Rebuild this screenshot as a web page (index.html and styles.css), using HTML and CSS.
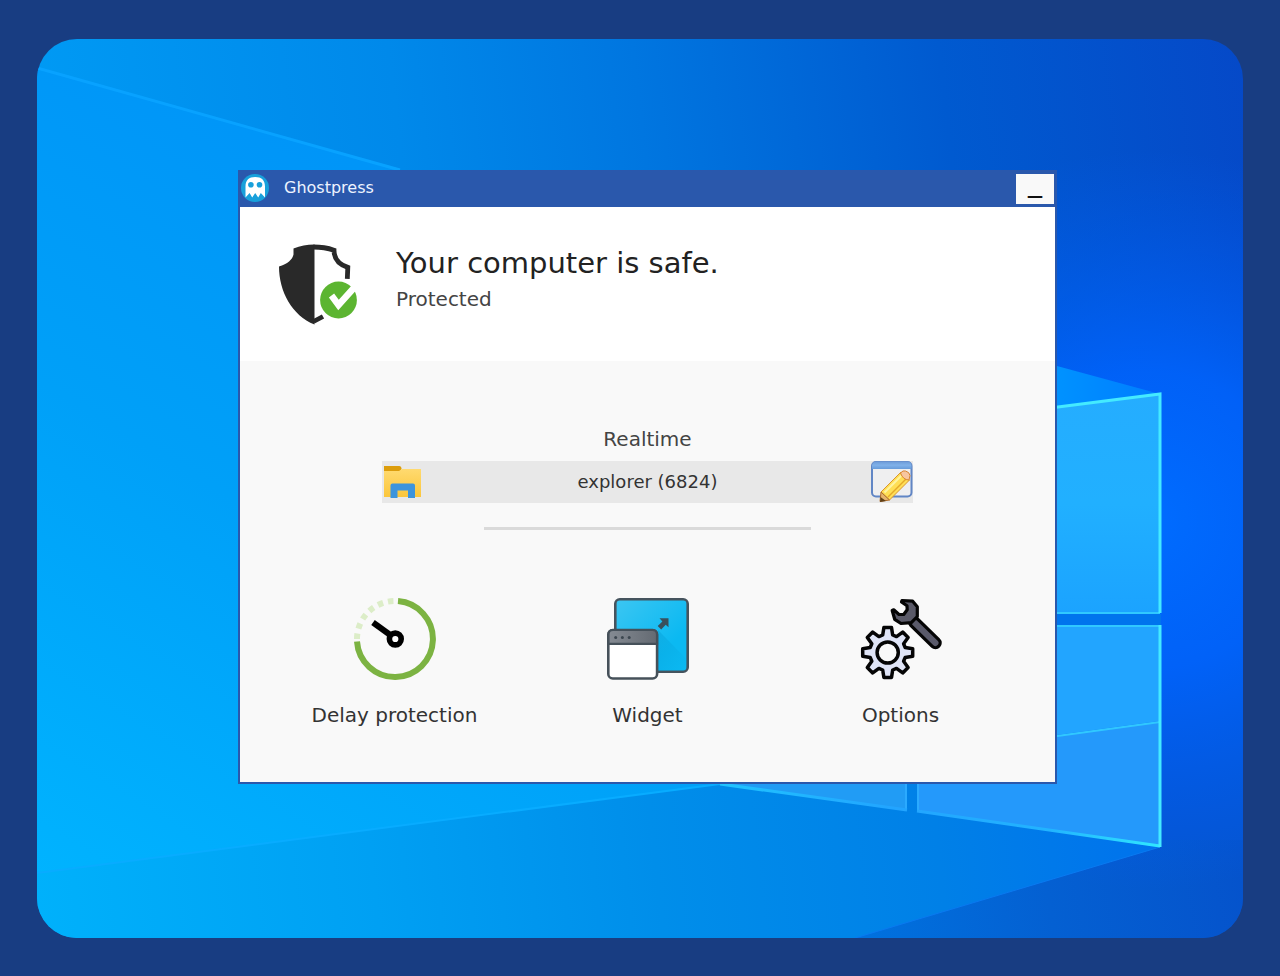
FILE: index.html
```html
<!DOCTYPE html>
<html lang="en">
<head>
<meta charset="utf-8">
<meta name="viewport" content="width=device-width, initial-scale=1">
<title>Ghostpress</title>
<link rel="stylesheet" href="styles.css">
</head>
<body>
<main class="desktop">
  <svg class="wallpaper" viewBox="37 39 1206 899" preserveAspectRatio="none" aria-hidden="true">
    <defs>
      <linearGradient id="sky" gradientUnits="userSpaceOnUse" x1="37" y1="180" x2="1243" y2="39">
        <stop offset="0" stop-color="#009af4"/><stop offset=".3" stop-color="#0089ea"/>
        <stop offset=".5" stop-color="#0076e0"/><stop offset=".75" stop-color="#005ad0"/><stop offset="1" stop-color="#0549c8"/>
      </linearGradient>
      <linearGradient id="beam" gradientUnits="userSpaceOnUse" x1="37" y1="900" x2="500" y2="140">
        <stop offset="0" stop-color="#00b4ff"/><stop offset=".5" stop-color="#00a0f8"/><stop offset="1" stop-color="#0092f8"/>
      </linearGradient>
      <linearGradient id="floor" gradientUnits="userSpaceOnUse" x1="37" y1="920" x2="1160" y2="800">
        <stop offset="0" stop-color="#00b1fb"/><stop offset=".3" stop-color="#00a0f3"/>
        <stop offset=".55" stop-color="#008eea"/><stop offset=".8" stop-color="#0080e7"/><stop offset="1" stop-color="#0072ed"/>
      </linearGradient>
      <linearGradient id="corner" gradientUnits="userSpaceOnUse" x1="855" y1="938" x2="1243" y2="870">
        <stop offset="0" stop-color="#0072df"/><stop offset=".5" stop-color="#0460d2"/><stop offset="1" stop-color="#0553cc"/>
      </linearGradient>
      <radialGradient id="glow" gradientUnits="userSpaceOnUse" cx="1150" cy="520" r="370">
        <stop offset="0" stop-color="#006cff"/><stop offset=".4" stop-color="#0064ff" stop-opacity=".85"/><stop offset="1" stop-color="#005cf0" stop-opacity="0"/>
      </radialGradient>
      <linearGradient id="ray" gradientUnits="userSpaceOnUse" x1="1057" y1="390" x2="1160" y2="394">
        <stop offset="0" stop-color="#0092ff"/><stop offset="1" stop-color="#007cff"/>
      </linearGradient>
      <linearGradient id="pane" x1="0" y1="0" x2="0" y2="1">
        <stop offset="0" stop-color="#25adff"/><stop offset=".5" stop-color="#21b0ff"/><stop offset="1" stop-color="#1ba3ff"/>
      </linearGradient>
      <linearGradient id="edge" gradientUnits="userSpaceOnUse" x1="720" y1="784" x2="1160" y2="847">
        <stop offset="0" stop-color="#20c4ff"/><stop offset=".4" stop-color="#22a4ff"/><stop offset=".75" stop-color="#22b4ff"/><stop offset="1" stop-color="#30e8ff"/>
      </linearGradient>
    </defs>
    <path fill="url(#sky)" d="M37 39h1206v899H37z"/>
    <path fill="url(#corner)" d="M855 938l305-91V740h83v198z"/>
    <path fill="#0555d2" d="M1160 640h83v200h-83z"/>
    <path fill="url(#glow)" d="M700 39h543v899H700z"/>
    <path fill="url(#beam)" d="M37 68l363 102 325 100v514L37 874z"/>
    <path fill="url(#ray)" d="M1057 366l103 28-103 14z"/>
    <path fill="url(#floor)" d="M37 873l683-89h440v63L855 938H37z"/>
    <path stroke="#08a2ff" stroke-width="3" fill="none" d="M37 68l363 102"/>
    <path stroke="#08acff" stroke-width="2" fill="none" d="M37 873l683-89"/>
    <path stroke="#0a7af0" stroke-width="1" fill="none" d="M855 938l305-91"/>
    <path fill="#0074ed" d="M1050 614h111v11h-111z"/>
    <path fill="url(#pane)" d="M1050 408l110-15v221h-110z"/>
    <path fill="#22a5ff" d="M1050 625h110v96l-110 15z"/>
    <path fill="#2499fb" d="M1050 736l110-15v126L917 811v-30h133z"/>
    <path fill="#219cf5" d="M720 784h187v26z"/>
    <path stroke="#30c8ff" stroke-width="2" fill="none" d="M1050 613h110M1050 626h110M1050 737l110-15"/>
    <path stroke="#2baaff" stroke-width="2" fill="none" d="M906 784v26M918 784v27"/>
    <path stroke="url(#edge)" stroke-width="3" fill="none" d="M720 784l187 26M917 811l243 35"/>
    <path stroke="#44eaff" stroke-width="3" fill="none" d="M1050 408l110-14v219M1160 625v222"/>
  </svg>

  <section class="window" aria-label="Ghostpress">
    <header class="titlebar">
      <svg class="titlebar-logo" viewBox="241 174 28 28" aria-hidden="true">
        <circle cx="255" cy="188" r="14" fill="#18a0db"/>
        <path fill="#fff" d="M245.500 197.500v-11c0-6.500 3.500-9.500 9.700-9.500s9.800 3 9.800 9.500v11l-4.200-4.500-2.600 4.500-3-4.500-3 4.500-2.600-4.500z"/>
        <circle cx="250.900" cy="184.800" r="2.800" fill="#18a0db"/><circle cx="259.500" cy="184.800" r="2.800" fill="#18a0db"/>
      </svg>
      <span class="titlebar-name">Ghostpress</span>
      <button class="minimize" type="button" aria-label="Minimize">_</button>
    </header>

    <section class="status">
      <svg class="status-shield" viewBox="279 243 80 82" aria-hidden="true">
        <path fill="#292929" d="M314.500 244.500c-8 0-14 1.500-21 4v6c-1 5-6 9.500-14.500 12 0 25 13 49 35.500 58z"/>
        <path fill="none" stroke="#292929" stroke-width="4.800" d="M313.500 247c7 0 14 1 20.500 3.200 0 9 5.500 14.500 13.800 17.200l-.5 11.500M313.500 321.500l9.500-5"/>
        <circle cx="338.500" cy="300" r="18.400" fill="#5cb531"/>
        <path fill="none" stroke="#fff" stroke-width="6.500" d="M331.500 295.500l7 9.500 18-20"/>
      </svg>
      <div class="status-text">
        <h1 class="status-title">Your computer is safe.</h1>
        <p class="status-note">Protected</p>
      </div>
    </section>

    <section class="panel">
      <h2 class="panel-title">Realtime</h2>
      <div class="process">
        <svg class="process-folder" viewBox="382 461 42 42" aria-hidden="true">
          <defs><linearGradient id="folder" x1="0" y1="0" x2="0" y2="1"><stop offset="0" stop-color="#ffda70"/><stop offset="1" stop-color="#fbc63b"/></linearGradient></defs>
          <path fill="#dc9d0c" d="M384 466h15.500q2 0 2 2.500l-1.500 3.500h-16z"/>
          <path fill="url(#folder)" d="M384 471h15l3-2h19v28h-37z"/>
          <path fill="#3d94dc" d="M390.500 498v-12.500q0-2 2-2h20.500q2 0 2 2V498h-7v-7.500h-10.500v7.500z"/>
        </svg>
        <span class="process-name">explorer (6824)</span>
        <button class="process-edit" type="button" aria-label="Edit">
          <svg class="process-edit-icon" viewBox="872 461 42 42" aria-hidden="true">
            <defs><linearGradient id="bar" x1="0" y1="0" x2="0" y2="1"><stop offset="0" stop-color="#6d9bd8"/><stop offset=".5" stop-color="#80b1e9"/><stop offset="1" stop-color="#679bda"/></linearGradient></defs>
            <rect x="873" y="462" width="39.500" height="34.500" rx="4" fill="#efeff0" stroke="#6186c5" stroke-width="2"/>
            <path fill="url(#bar)" d="M873 469v-3q0-4.500 4.500-4.500h31q4 0 4 4.500v3z"/>
            <path fill="#ffdf55" stroke="#d99530" d="M882 492l20-20 8.500 8-20 20z"/>
            <path stroke="#fff4a0" stroke-width="2" d="M885.500 492.500l18-18"/>
            <path stroke="#e5a929" stroke-width="1.500" d="M889 497l18.500-18.500"/>
            <path fill="#f7c6a0" stroke="#d98532" d="M901.500 473q2.500-3 5-2 4 1 4.500 4.500l-1 4.500q-6 0-8.500-7z"/>
            <path fill="#e5b46c" stroke="#af6d2a" d="M882 492l-1 9.500 9.500-1.500z"/>
            <path fill="#604018" d="M881.500 497l-.5 5 6-1z"/>
          </svg>
        </button>
      </div>
      <hr class="divider">
      <nav class="actions" aria-label="Actions">
        <button class="action" type="button">
          <svg class="action-icon" viewBox="353 598 82 82" aria-hidden="true">
            <path fill="none" stroke="#7cb342" stroke-width="6" d="M397 601.100A38 38 0 1 1 356 641.500"/>
            <path fill="none" stroke="#dcedc8" stroke-width="6" stroke-dasharray="5.500 5" d="M356 639A38 38 0 0 1 394.500 601"/>
            <path stroke="#000" stroke-width="6" d="M372 622.500l18 13"/>
            <circle cx="394.300" cy="639" r="5.900" fill="#fff" stroke="#000" stroke-width="5.600"/>
          </svg>
          <span class="action-label">Delay protection</span>
        </button>
        <button class="action" type="button">
          <svg class="action-icon" viewBox="607 598 82 82" aria-hidden="true">
            <defs>
              <linearGradient id="screen" x1="0" y1="0" x2=".7" y2=".7"><stop offset="0" stop-color="#3cc6f2"/><stop offset="1" stop-color="#0bb9f2"/></linearGradient>
              <linearGradient id="head" x1="0" y1="0" x2="1" y2="0"><stop offset="0" stop-color="#858b93"/><stop offset="1" stop-color="#646a72"/></linearGradient>
              <linearGradient id="shade" x1="0" y1="0" x2="1" y2="1"><stop offset="0" stop-color="#08a4dc"/><stop offset="1" stop-color="#08a4dc" stop-opacity="0"/></linearGradient>
            </defs>
            <rect x="615.300" y="599.300" width="72.400" height="72.400" rx="4.500" fill="url(#screen)" stroke="#46545e" stroke-width="2.600"/>
            <path fill="url(#shade)" opacity=".6" d="M658 630l28.500 29v11.500H658z"/>
            <path fill="#39505d" d="M659.500 618.300h9v9l-2.800-2.500-4.500 4.600-3.500-3.500 4.700-4.500z"/>
            <rect x="608.300" y="630" width="48.800" height="48.500" rx="4.500" fill="#fff" stroke="#46515a" stroke-width="2.600"/>
            <path fill="url(#head)" stroke="#46515a" stroke-width="2.200" d="M608.500 643.800v-9.300q0-4.500 4.500-4.500h39.500q4.500 0 4.500 4.500v9.300z"/>
            <g fill="#3d4750"><circle cx="615.700" cy="637.600" r="1.500"/><circle cx="622.400" cy="637.600" r="1.500"/><circle cx="629.200" cy="637.600" r="1.500"/></g>
          </svg>
          <span class="action-label">Widget</span>
        </button>
        <button class="action" type="button">
          <svg class="action-icon" viewBox="859 598 82 82" aria-hidden="true">
            <g fill="#dfe4f6" stroke="#050505" stroke-width="3.500" stroke-linejoin="round" transform="translate(886.700 652.500)">
              <path d="M-5-17.500l1.200-7.500h7.600L5-17.500 8.800-15.900 15-20.400 20.400-15 15.900-8.800 17.500-5 25-3.800v7.600L17.500 5 15.900 8.800 20.400 15 15 20.400 8.800 15.900 5 17.500 3.800 25h-7.600L-5 17.500-8.800 15.900-15 20.400-20.400 15-15.900 8.800-17.500 5-25 3.800v-7.600L-17.500-5-15.900-8.800-20.400-15-15-20.400-8.800-15.900z"/>
              <circle r="10.600" fill="#f9f9f9"/>
            </g>
            <path stroke="#050505" stroke-width="12.500" stroke-linecap="round" d="M913 622l21.500 21"/>
            <path stroke="#5a5a6a" stroke-width="6" stroke-linecap="round" d="M914 623l20.500 20"/>
            <path fill="#5a5a68" stroke="#050505" stroke-width="3.200" stroke-linejoin="round" d="M901 600.500l10.700.7 4.600 5.500v9.800l-6 6.200-10.300.8-6.300-4.200-2.500-8.800 1.500-.7 5.300 4.700h4.700l3.500-4.700-.2-4-5.500-3.800z"/>
          </svg>
          <span class="action-label">Options</span>
        </button>
      </nav>
    </section>
  </section>
</main>
</body>
</html>
```

FILE: styles.css
```css
* {
  box-sizing: border-box;
}

body {
  margin: 0;
  min-height: 100vh;
  padding: 39px 37px 38px;
  background: #183d82;
  color: #333;
  font-family: "DejaVu Sans", Verdana, sans-serif;
  font-size: 20px;
  line-height: 24px;
}

h1,
h2,
p {
  margin: 0;
  font-weight: 400;
}

button {
  padding: 0;
  border: 0;
  background: none;
  color: inherit;
  font: inherit;
  cursor: pointer;
}

svg {
  display: block;
}

.desktop {
  position: relative;
  padding: 131px 186px 154px 201px;
  border-radius: 40px;
  overflow: hidden;
}

.wallpaper {
  position: absolute;
  inset: 0;
  width: 100%;
  height: 100%;
}

.window {
  position: relative;
  border: 2px solid #2a58ac;
  background: #f9f9f9;
}

.titlebar {
  display: flex;
  align-items: flex-start;
  padding: 2px 1px 3px;
  background: #2a58ac;
}

.titlebar-logo {
  width: 28px;
  height: 28px;
}

.titlebar-name {
  flex: 1;
  padding-left: 15px;
  color: #edf3ff;
  font-size: 16px;
  line-height: 28px;
}

.minimize {
  width: 38px;
  height: 30px;
  padding-bottom: 14px;
  background: #f9f9f9;
  color: #111;
  font-size: 28px;
  line-height: 14px;
}

.status {
  display: flex;
  gap: 37px;
  padding: 36px 39px;
  background: #fff;
}

.status-shield {
  width: 80px;
  height: 82px;
}

.status-title {
  color: #222;
  font-size: 29px;
  line-height: 40px;
}

.status-note {
  color: #444;
  line-height: 32px;
}

.panel {
  display: flex;
  flex-direction: column;
  align-items: center;
  padding: 66px 28px 55px;
}

.panel-title {
  color: #444;
  font-size: 20px;
}

.process {
  display: flex;
  align-items: center;
  justify-content: space-between;
  width: 70%;
  margin-top: 10px;
  background: #e8e8e8;
}

.process-folder,
.process-edit-icon {
  width: 42px;
  height: 42px;
}

.process-name {
  font-size: 18px;
}

.divider {
  width: 43%;
  height: 3px;
  margin: 24px 0 68px;
  border: 0;
  background: #dadada;
}

.actions {
  display: grid;
  grid-template-columns: repeat(3, 1fr);
  width: 100%;
}

.action {
  display: flex;
  flex-direction: column;
  align-items: center;
  gap: 23px;
}

.action-icon {
  width: 82px;
  height: 82px;
}
```
